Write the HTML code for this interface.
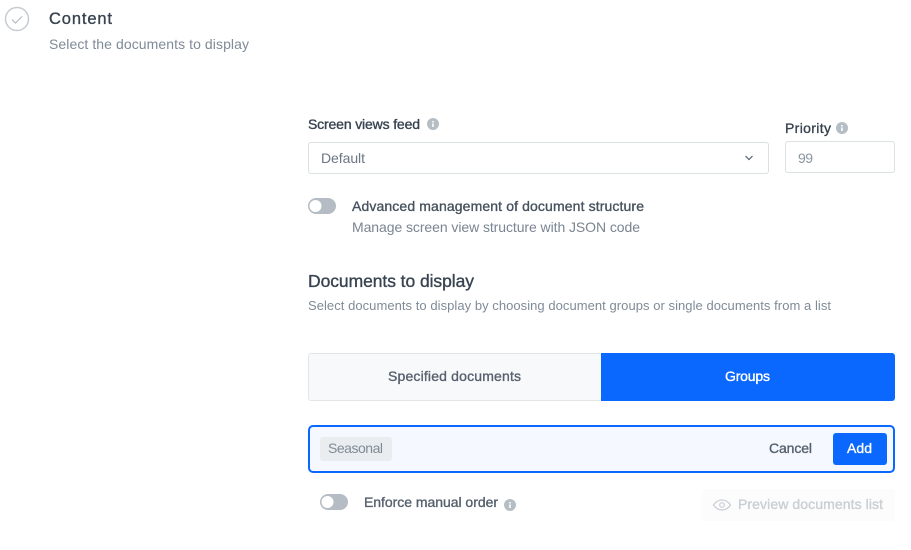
<!DOCTYPE html>
<html lang="en">
<head>
<meta charset="utf-8">
<title>Content</title>
<style>
html,body{margin:0;padding:0;background:#fff;width:911px;height:550px;overflow:hidden}
svg{display:block}
text{font-family:"Liberation Sans",sans-serif;white-space:pre}
.m{stroke-width:.35px}
</style>
</head>
<body>
<svg width="911" height="550" viewBox="0 0 911 550" xmlns="http://www.w3.org/2000/svg">
<rect width="911" height="550" fill="#fff"/>

<!-- header -->
<circle cx="17" cy="19" r="11.5" fill="none" stroke="#c5ccd2" stroke-width="1.5"/>
<path d="M12 19.5l3.500 3.500 6.500-6.500" fill="none" stroke="#b4bcc4" stroke-width="1.200"/>
<text x="49" y="24" font-size="16.500" fill="#384350" stroke="#384350" class="m" textLength="63">Content</text>
<text x="49" y="49" font-size="14" fill="#7f8b97" textLength="200">Select the documents to display</text>

<!-- feed -->
<text x="308" y="129" font-size="14" fill="#384350" stroke="#384350" class="m" textLength="112">Screen views feed</text>
<circle cx="433" cy="124" r="6" fill="#b5bdc5"/>
<rect x="432.200" y="123.400" width="1.600" height="3.600" fill="#fff"/><rect x="432.200" y="121" width="1.600" height="1.500" fill="#fff"/>
<rect x="308.500" y="142.500" width="460" height="31" rx="2.500" fill="#fff" stroke="#dbe0e3"/>
<text x="321" y="163" font-size="14" fill="#6b7785" textLength="44">Default</text>
<path d="M745.500 156l3.500 3.500 3.500-3.500" fill="none" stroke="#56616d" stroke-width="1.200"/>

<!-- priority -->
<text x="785" y="133" font-size="14" fill="#384350" stroke="#384350" class="m" textLength="46">Priority</text>
<circle cx="842" cy="128" r="6" fill="#b5bdc5"/>
<rect x="841.200" y="127.400" width="1.600" height="3.600" fill="#fff"/><rect x="841.200" y="125" width="1.600" height="1.500" fill="#fff"/>
<rect x="785.500" y="141.500" width="109" height="31" rx="2.500" fill="#fff" stroke="#dbe0e3"/>
<text x="798" y="163" font-size="14" fill="#8a95a0" textLength="15">99</text>

<!-- advanced toggle -->
<rect x="308" y="198" width="28" height="16" rx="8" fill="#b5bcc4"/>
<circle cx="315.500" cy="206" r="6" fill="#fff"/>
<text x="352" y="211" font-size="14" fill="#47525e" stroke="#47525e" class="m" textLength="292">Advanced management of document structure</text>
<text x="352" y="232" font-size="14" fill="#7a8592" textLength="288">Manage screen view structure with JSON code</text>

<!-- documents -->
<text x="308" y="287" font-size="17.500" fill="#384350" stroke="#384350" class="m" textLength="166">Documents to display</text>
<text x="308" y="310" font-size="13" fill="#7f8b97" textLength="523">Select documents to display by choosing document groups or single documents from a list</text>

<!-- tabs -->
<rect x="308.500" y="353.500" width="293" height="47" rx="2.500" fill="#f8f9fb" stroke="#e2e6e9"/>
<text x="388" y="381" font-size="14" fill="#56616d" stroke="#56616d" class="m" textLength="133">Specified documents</text>
<path d="M601 353h291a3 3 0 0 1 3 3v42a3 3 0 0 1-3 3h-291z" fill="#0b68ff"/>
<text x="725" y="381" font-size="14" fill="#fff" stroke="#fff" class="m" textLength="45">Groups</text>

<!-- input -->
<rect x="309" y="426" width="585" height="46" rx="4" fill="#f5f9ff" stroke="#0b68ff" stroke-width="2"/>
<rect x="320" y="437" width="72" height="24" rx="3" fill="#e9edef"/>
<text x="328" y="453" font-size="14" fill="#7f8b97" textLength="55">Seasonal</text>
<text x="769" y="453" font-size="14" fill="#56616d" stroke="#56616d" class="m" textLength="43">Cancel</text>
<rect x="833" y="433" width="54" height="32" rx="3" fill="#0b68ff"/>
<text x="847" y="453" font-size="14" fill="#fff" stroke="#fff" class="m" textLength="25">Add</text>

<!-- enforce -->
<rect x="320" y="494" width="28" height="16" rx="8" fill="#b5bcc4"/>
<circle cx="327.500" cy="502" r="6" fill="#fff"/>
<text x="364" y="507" font-size="14" fill="#56616d" stroke="#56616d" class="m" textLength="134">Enforce manual order</text>
<circle cx="510" cy="505" r="6" fill="#b5bdc5"/>
<rect x="509.200" y="504.400" width="1.600" height="3.600" fill="#fff"/><rect x="509.200" y="502" width="1.600" height="1.500" fill="#fff"/>

<!-- preview -->
<rect x="702" y="489" width="193" height="32" rx="3" fill="#fcfcfd"/>
<path d="M713.500 505c2.500-3.500 5.500-5 8.500-5s6 1.500 8.500 5c-2.500 3.500-5.500 5-8.500 5s-6-1.500-8.500-5z" fill="none" stroke="#c9ced3" stroke-width="1.200"/>
<circle cx="722" cy="505" r="2.300" fill="none" stroke="#c9ced3" stroke-width="1.200"/>
<text x="738" y="509" font-size="14" fill="#c9ced3" stroke="#c9ced3" class="m" textLength="145">Preview documents list</text>
</svg>
</body>
</html>
